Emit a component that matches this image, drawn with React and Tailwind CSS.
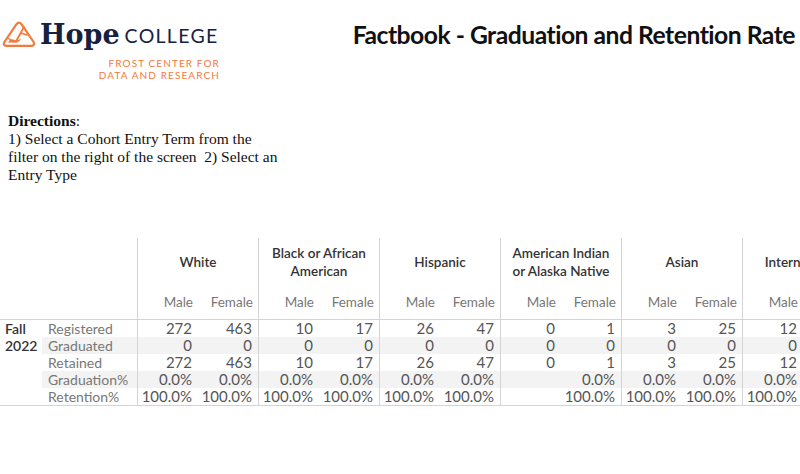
import React from "react";

const groups = [
  { name: ["White"], data: [["272", "463"], ["0", "0"], ["272", "463"], ["0.0%", "0.0%"], ["100.0%", "100.0%"]] },
  { name: ["Black or African", "American"], data: [["10", "17"], ["0", "0"], ["10", "17"], ["0.0%", "0.0%"], ["100.0%", "100.0%"]] },
  { name: ["Hispanic"], data: [["26", "47"], ["0", "0"], ["26", "47"], ["0.0%", "0.0%"], ["100.0%", "100.0%"]] },
  { name: ["American Indian", "or Alaska Native"], data: [["0", "1"], ["0", "0"], ["0", "1"], ["", "0.0%"], ["", "100.0%"]] },
  { name: ["Asian"], data: [["3", "25"], ["0", "0"], ["3", "25"], ["0.0%", "0.0%"], ["100.0%", "100.0%"]] },
  { name: ["International"], data: [["12", "1"], ["0", "0"], ["12", "1"], ["0.0%", "0.0%"], ["100.0%", "100.0%"]] },
];

const rowLabels = ["Registered", "Graduated", "Retained", "Graduation%", "Retention%"];

function Logo() {
  return (
    <svg width="34" height="27" viewBox="0 0 34 27" fill="none">
      <path
        d="M14.5 3.2 Q17 0.2 19.5 3.2 L31.6 21 Q33.2 24.6 29.6 24.8 L4.4 24.8 Q0.8 24.6 2.4 21 Z"
        stroke="#f37a3a"
        strokeWidth="2.2"
        strokeLinejoin="round"
      />
      <path d="M22 6 L14.5 19.5" stroke="#f37a3a" strokeWidth="1.8" strokeLinecap="round" />
      <path d="M19 12 L25 14" stroke="#f37a3a" strokeWidth="1.6" strokeLinecap="round" />
      <path
        d="M6 21.5 Q8 17.5 11 18.5 L14.5 19.5 Q17 19 19 17.5 Q18 21 14 21.8 Z"
        fill="#f37a3a"
      />
      <path d="M6.5 17.5 L9 19" stroke="#f37a3a" strokeWidth="1.4" strokeLinecap="round" />
    </svg>
  );
}

export default function App() {
  const font = { fontFamily: "Lato, 'Open Sans', sans-serif" };
  return (
    <div className="w-[800px] h-[474px] bg-white overflow-hidden" style={font}>
      {/* Header */}
      <div className="flex justify-between items-start pt-[18px]">
        <div className="flex flex-col pl-[2px]">
          <div className="flex items-end">
            <div className="mb-[4px]">
              <Logo />
            </div>
            <span
              className="ml-[4px] text-[27px] font-bold leading-[34px] text-[#15213f]"
              style={{ fontFamily: "'DejaVu Serif', serif" }}
            >
              Hope
            </span>
            <span className="ml-[5px] mb-[5px] text-[19.5px] leading-[22px] tracking-[1.3px] text-[#15213f]">
              COLLEGE
            </span>
          </div>
          <div className="flex flex-col items-end w-[218px] mt-[5px] text-[10px] leading-[12px] tracking-[1.1px] text-[#f37a3a]">
            <span>FROST CENTER FOR</span>
            <span>DATA AND RESEARCH</span>
          </div>
        </div>
        <div className="pr-[5px] pt-[2px] text-[24.7px] font-bold leading-[30px] tracking-[-0.5px] text-[#111]">
          Factbook - Graduation and Retention Rate
        </div>
      </div>

      {/* Directions */}
      <div
        className="mt-[31px] pl-[8px] text-[15.5px] leading-[18px] text-[#111]"
        style={{ fontFamily: "'Liberation Serif', serif" }}
      >
        <div>
          <span className="font-bold">Directions</span>:
        </div>
        <div>1) Select a Cohort Entry Term from the</div>
        <div>filter on the right of the screen&nbsp; 2) Select an</div>
        <div>Entry Type</div>
      </div>

      {/* Table */}
      <div className="mt-[54px] w-[900px]">
        {/* Header */}
        <div className="flex h-[82px] border-b border-[#d4d4d4]">
          <div className="w-[137px] shrink-0" />
          {groups.map((g, i) => (
            <div key={i} className="w-[121px] shrink-0 border-l border-[#d4d4d4] flex flex-col">
              <div className="h-[48px] flex flex-col items-center justify-center text-[13.5px] leading-[18px] font-semibold text-[#333]">
                {g.name.map((n, j) => (
                  <span key={j} className="whitespace-nowrap">{n}</span>
                ))}
              </div>
              <div className="flex h-[34px] items-center text-[13.5px] text-[#777]">
                <span className="w-1/2 text-right pr-[5px]">Male</span>
                <span className="w-1/2 text-right pr-[5px]">Female</span>
              </div>
            </div>
          ))}
        </div>
        {/* Body */}
        <div className="flex border-b border-[#d4d4d4]">
          <div className="w-[42px] shrink-0 pl-[5px] text-[14px] leading-[17px] font-semibold text-[#333]">
            <div>Fall</div>
            <div>2022</div>
          </div>
          <div className="flex flex-col">
            {rowLabels.map((label, r) => (
              <div key={r} className={`flex h-[17px] ${r % 2 === 1 ? "bg-[#f3f3f3]" : ""}`}>
                <div className="w-[95px] shrink-0 pl-[6px] text-[14px] leading-[17px] text-[#777] whitespace-nowrap">
                  {label}
                </div>
                {groups.map((g, i) => (
                  <div key={i} className="w-[121px] shrink-0 border-l border-[#d4d4d4] flex text-[15px] leading-[17px] text-[#555]">
                    <span className="w-1/2 text-right pr-[6px]">{g.data[r][0]}</span>
                    <span className="w-1/2 text-right pr-[6px]">{g.data[r][1]}</span>
                  </div>
                ))}
              </div>
            ))}
          </div>
        </div>
      </div>
    </div>
  );
}
